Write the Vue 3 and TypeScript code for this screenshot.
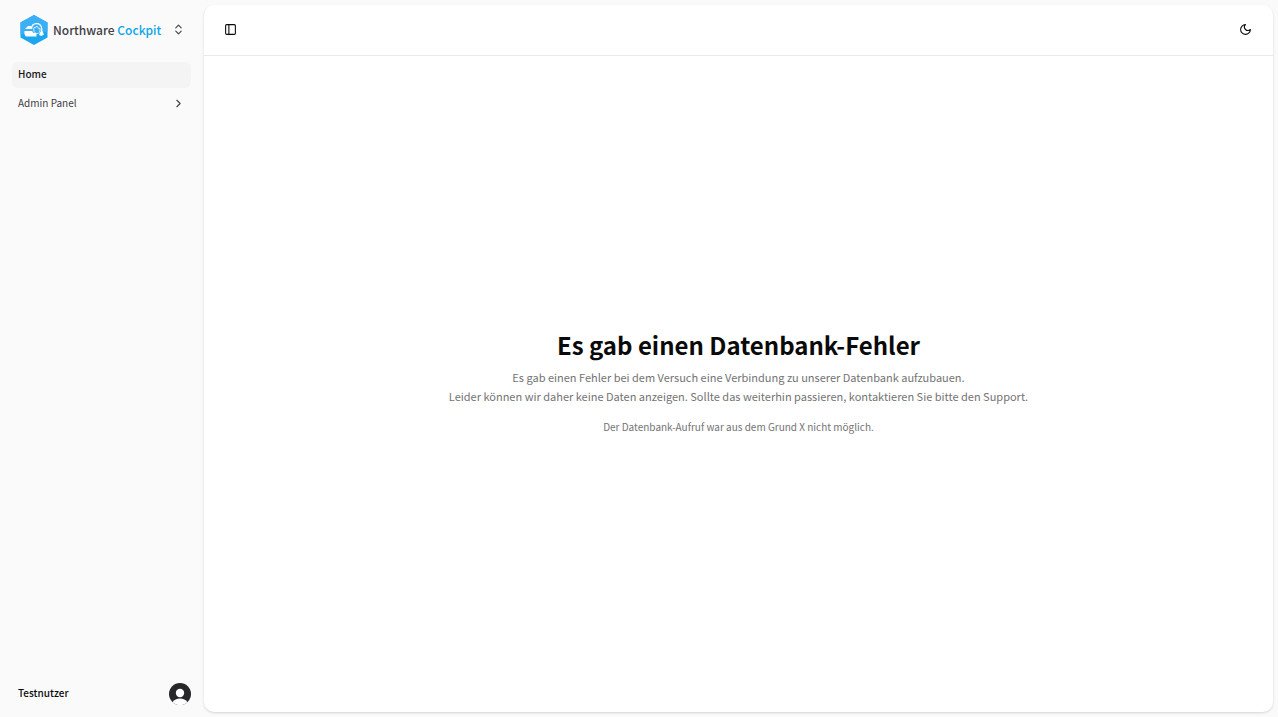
<script setup lang="ts">
import { ref } from 'vue'

const sidebarOpen = ref(true)
const userName = 'Testnutzer'
</script>

<template>
  <div class="shell">
    <aside v-if="sidebarOpen" class="sidebar">
      <button class="brand" type="button">
        <svg class="logo" viewBox="0 0 28 30" aria-hidden="true">
          <path d="M14 0 27.500 7.500v15L14 30 .5 22.500v-15Z" fill="#1ba6ef" />
          <path d="M14 0 27.500 7.500v9L.5 19.500v-12Z" fill="#3aaff3" />
          <path d="M5.500 13.500 8 11h3.500v3H5Z" fill="#fff" />
          <path d="M4.500 16h7.500l1.500 2h3v3.500H7c-2 0-3-2-2.500-5.500Z" fill="#fff" />
          <path d="M11.500 14c.2-7 9.500-7.300 10.200-.2.100 1.500 0 2.800-.5 4" fill="none" stroke="#fff" stroke-width="1.300" />
          <path d="M14 12.500c-1 4 1 6 3 6s3.500-1.500 3-5c-1.700 0-2.500-1-3-2.500-.5 1-1.500 1.500-3 1.500" fill="none" stroke="#fff" stroke-width=".8" />
          <path d="m20 17.500 2.500-1.500 1.300 3.500-2.300 1.500-2.500-1Z" fill="#fff" />
        </svg>
        <span class="brand-name">Northware <span class="accent">Cockpit</span></span>
        <svg class="icon" viewBox="0 0 24 24" aria-hidden="true"><path d="m7 15 5 5 5-5M7 9l5-5 5 5" /></svg>
      </button>
      <nav class="nav">
        <a class="item active" href="#home" aria-current="page">Home</a>
        <button class="item" type="button">
          <span>Admin Panel</span>
          <svg class="icon" viewBox="0 0 24 24" aria-hidden="true"><path d="m9 18 6-6-6-6" /></svg>
        </button>
      </nav>
      <footer class="user">
        <span>{{ userName }}</span>
        <button class="avatar" type="button" aria-label="Benutzerkonto">
          <svg viewBox="0 0 22 22" aria-hidden="true">
            <circle cx="11" cy="11" r="11" fill="#27272a" />
            <circle cx="11" cy="10" r="4.200" fill="#fff" />
            <path d="M3.500 19.200c3-5 12-5 15 0A11 11 0 0 1 3.500 19.200Z" fill="#fff" />
          </svg>
        </button>
      </footer>
    </aside>
    <div class="panel">
      <header class="topbar">
        <button class="tool" type="button" aria-label="Seitenleiste umschalten" @click="sidebarOpen = !sidebarOpen">
          <svg class="icon" viewBox="0 0 24 24" aria-hidden="true"><rect x="3" y="3" width="18" height="18" rx="2" /><path d="M9 3v18" /></svg>
        </button>
        <button class="tool" type="button" aria-label="Dunkles Design">
          <svg class="icon" viewBox="0 0 24 24" aria-hidden="true"><path d="M12 3a6 6 0 0 0 9 9 9 9 0 1 1-9-9Z" /></svg>
        </button>
      </header>
      <main class="content">
        <h1>Es gab einen Datenbank-Fehler</h1>
        <p class="lead">
          Es gab einen Fehler bei dem Versuch eine Verbindung zu unserer Datenbank aufzubauen.<br />
          Leider können wir daher keine Daten anzeigen. Sollte das weiterhin passieren, kontaktieren Sie bitte den Support.
        </p>
        <p class="detail">Der Datenbank-Aufruf war aus dem Grund X nicht möglich.</p>
      </main>
    </div>
  </div>
</template>

<style>
body {
  margin: 0;
  background: #fafafa;
}
</style>

<style scoped>
.shell {
  display: flex;
  box-sizing: border-box;
  min-height: 100vh;
  padding: 5px;
  background: #fafafa;
  color: #0a0a0a;
  font-family: "Noto Sans CJK JP", "Noto Sans", sans-serif;
  font-size: 10px;
  line-height: 16px;
}
button {
  margin: 0;
  padding: 0;
  border: 0;
  background: none;
  color: inherit;
  font: inherit;
  cursor: pointer;
}
.icon {
  flex: none;
  width: 13px;
  height: 13px;
  fill: none;
  stroke: currentColor;
  stroke-width: 2;
  stroke-linecap: round;
  stroke-linejoin: round;
}
.sidebar {
  display: flex;
  flex: none;
  flex-direction: column;
  box-sizing: border-box;
  width: 199px;
  padding: 5px 13px 7px 7px;
}
.brand {
  display: flex;
  align-items: center;
  gap: 5px;
  box-sizing: border-box;
  height: 40px;
  padding: 0 6px 1px 8px;
  color: #3f3f46;
  text-align: left;
}
.logo {
  flex: none;
  width: 28px;
  height: 30px;
}
.brand-name {
  flex: 1;
  font-size: 12px;
  font-weight: 500;
  white-space: nowrap;
}
.accent {
  color: #0ea5e9;
}
.nav {
  display: flex;
  flex-direction: column;
  gap: 3px;
  margin-top: 12px;
}
.item {
  display: flex;
  align-items: center;
  justify-content: space-between;
  box-sizing: border-box;
  height: 26px;
  padding: 0 6px 2px;
  border-radius: 6px;
  color: #3f3f46;
  text-decoration: none;
}
.active {
  background: #f4f4f5;
  color: #18181b;
  font-weight: 500;
}
.user {
  display: flex;
  align-items: center;
  justify-content: space-between;
  margin-top: auto;
  padding-left: 6px;
  font-weight: 500;
}
.user span {
  padding-bottom: 2px;
}
.avatar {
  width: 22px;
  height: 22px;
}
.avatar svg {
  display: block;
}
.panel {
  display: flex;
  flex: 1;
  flex-direction: column;
  min-width: 0;
  border-radius: 10px;
  background: #fff;
  box-shadow: 0 1px 3px rgb(0 0 0 / 10%), 0 1px 2px rgb(0 0 0 / 6%);
}
.topbar {
  display: flex;
  align-items: center;
  justify-content: space-between;
  box-sizing: border-box;
  height: 51px;
  padding: 0 16px 1px 15px;
  border-bottom: 1px solid #e9e9e9;
}
.tool {
  display: flex;
  align-items: center;
  justify-content: center;
  width: 23px;
  height: 23px;
}
.content {
  display: flex;
  flex: 1;
  flex-direction: column;
  align-items: center;
  justify-content: center;
  padding: 0 16px 3px;
  text-align: center;
}
h1,
p {
  margin: 0;
}
h1 {
  font-size: 24px;
  font-weight: 700;
  line-height: 30px;
}
.lead {
  margin-top: 8px;
  color: #737373;
  font-size: 11px;
  line-height: 19px;
}
.detail {
  margin-top: 13px;
  color: #737373;
}
</style>
